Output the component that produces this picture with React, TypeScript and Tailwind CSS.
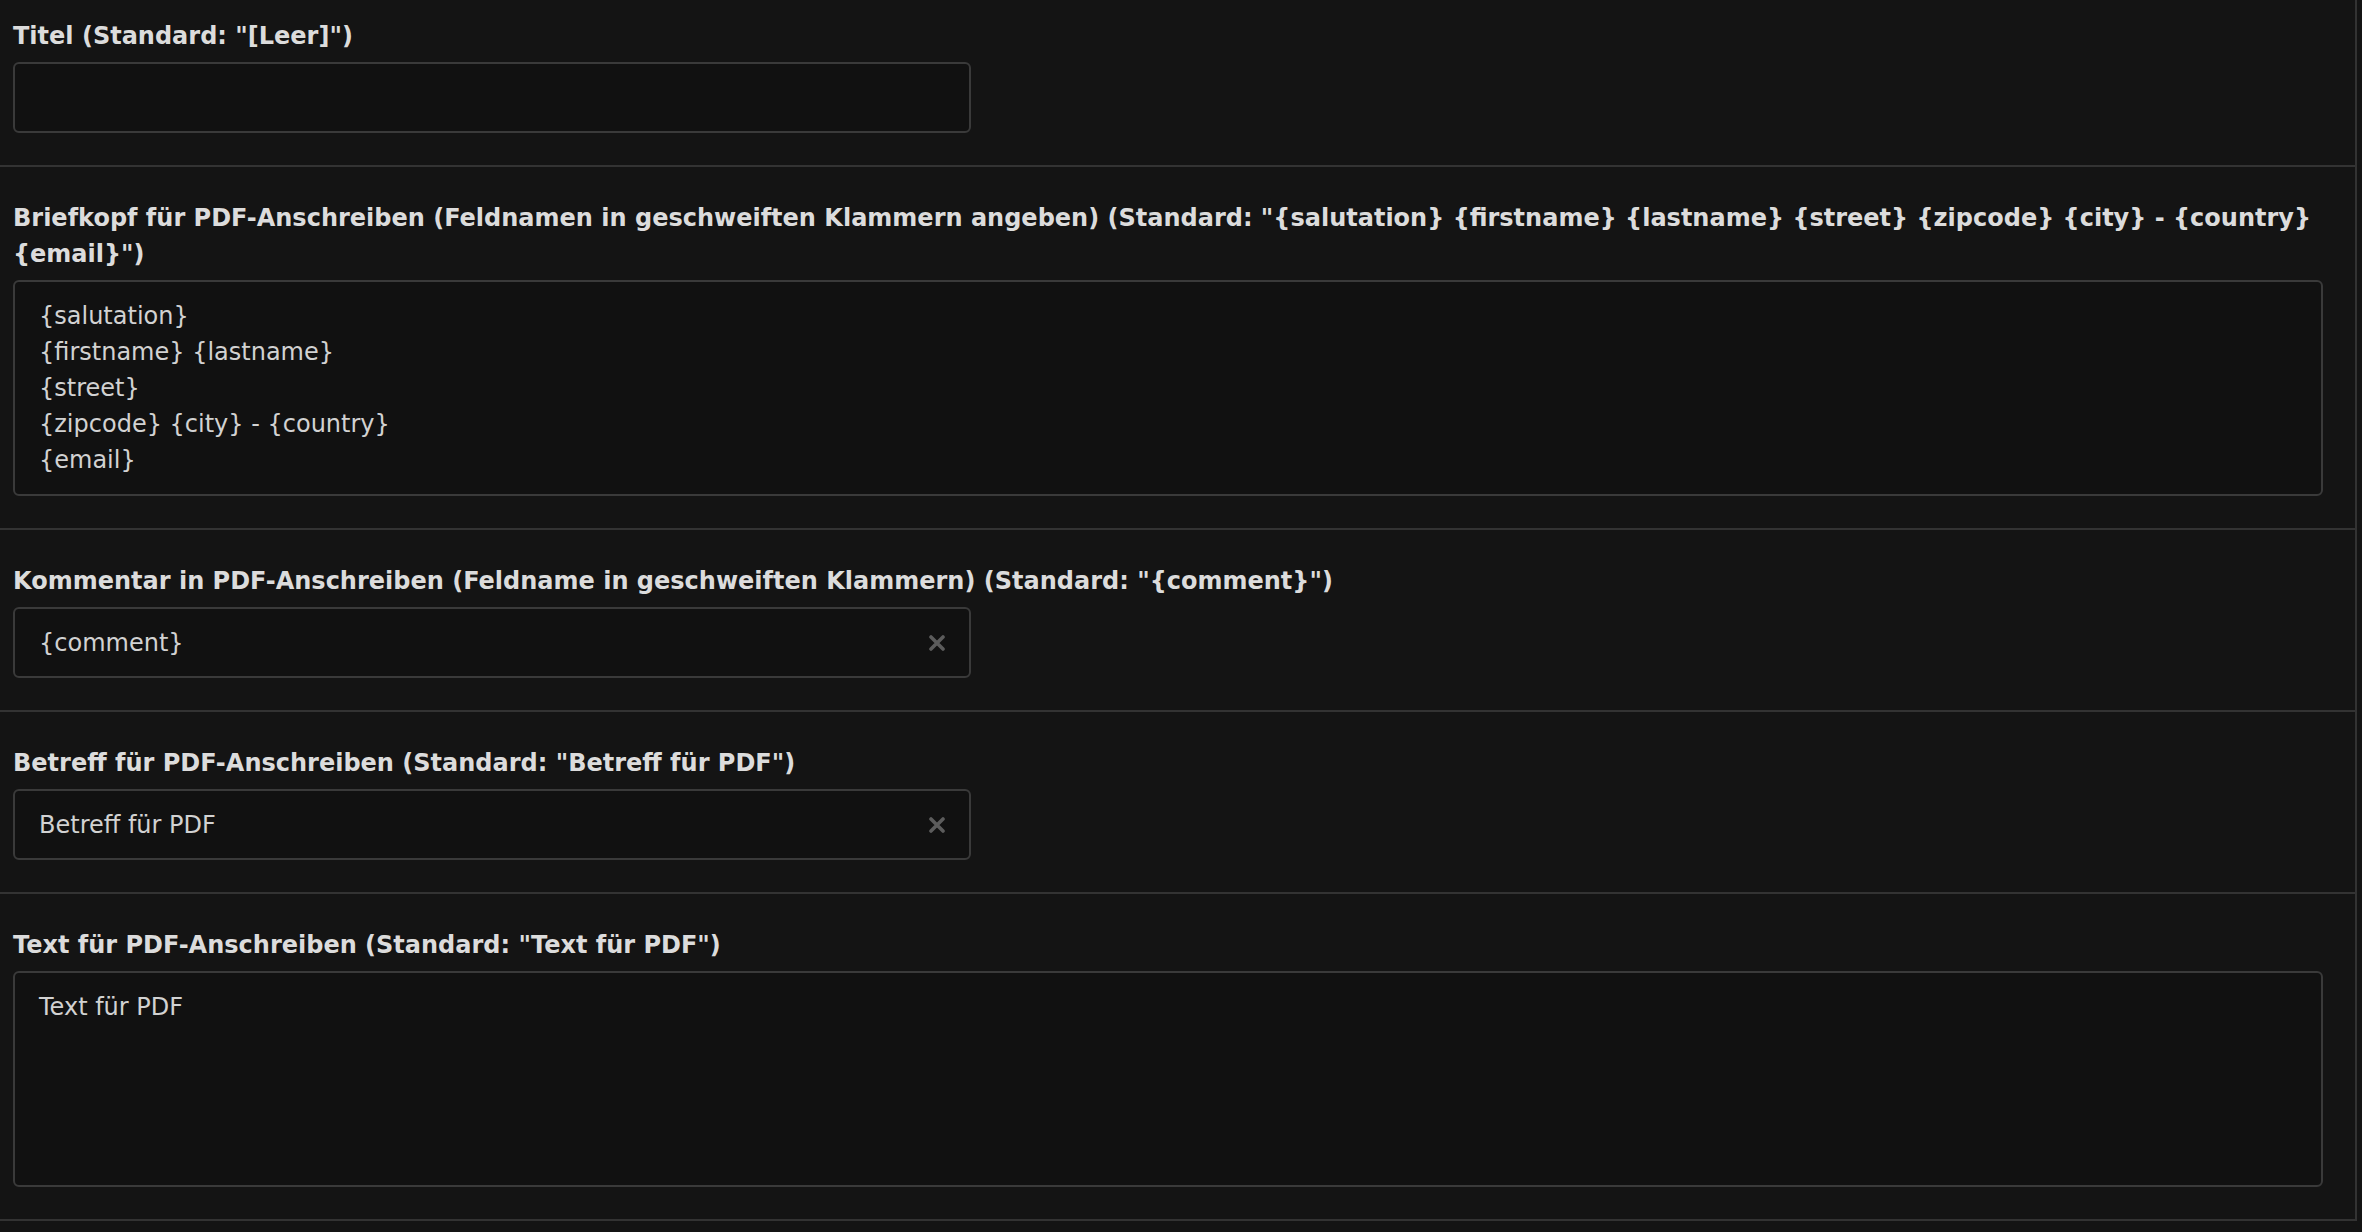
type Field = {
  label: string
  kind: 'input' | 'textarea'
  value: string
  clearable?: boolean
}

const fields: Field[] = [
  { label: 'Titel (Standard: "[Leer]")', kind: 'input', value: '' },
  {
    label:
      'Briefkopf für PDF-Anschreiben (Feldnamen in geschweiften Klammern angeben) (Standard: "{salutation} {firstname} {lastname} {street} {zipcode} {city} - {country} {email}")',
    kind: 'textarea',
    value: '{salutation}\n{firstname} {lastname}\n{street}\n{zipcode} {city} - {country}\n{email}',
  },
  {
    label: 'Kommentar in PDF-Anschreiben (Feldname in geschweiften Klammern) (Standard: "{comment}")',
    kind: 'input',
    value: '{comment}',
    clearable: true,
  },
  { label: 'Betreff für PDF-Anschreiben (Standard: "Betreff für PDF")', kind: 'input', value: 'Betreff für PDF', clearable: true },
  { label: 'Text für PDF-Anschreiben (Standard: "Text für PDF")', kind: 'textarea', value: 'Text für PDF' },
]

// bold "times" glyph used as the clear button
function ClearIcon() {
  return (
    <svg width="16" height="16" viewBox="0 0 16 16" className="text-[#5c5c5c]">
      <path d="M2 2 L14 14 M14 2 L2 14" stroke="currentColor" strokeWidth="3.6" strokeLinecap="round" />
    </svg>
  )
}

function TextInput({ value, clearable }: { value: string; clearable?: boolean }) {
  return (
    <div className="w-[958px] h-[71px] bg-[#111111] border-2 border-[#3a3a3a] rounded-[6px] flex items-center pl-[24px] pr-[24px]">
      <span className="flex-1 text-[#d2d2d2]">{value}</span>
      {clearable && <ClearIcon />}
    </div>
  )
}

function TextArea({ value }: { value: string }) {
  return (
    <div className="w-full h-[216px] bg-[#111111] border-2 border-[#3a3a3a] rounded-[6px] px-[24px] py-[16px] text-[#d2d2d2] whitespace-pre-line">
      {value}
    </div>
  )
}

export default function App() {
  return (
    <div className="min-h-screen bg-[#141414] font-['DejaVu_Sans',Verdana,sans-serif] text-[24px] leading-[36px]">
      <div className="w-[2357px] border-r-2 border-[#333333]">
        {fields.map((f, i) => (
          <div
            key={i}
            className={`border-b-2 border-[#333333] pl-[13px] pr-[32px] pb-[32px] ${i === 0 ? 'pt-[18px]' : 'pt-[33px]'}`}
          >
            <div className="font-bold text-[#dcdcdc] mb-[8px]">{f.label}</div>
            {f.kind === 'input' ? <TextInput value={f.value} clearable={f.clearable} /> : <TextArea value={f.value} />}
          </div>
        ))}
      </div>
    </div>
  )
}
